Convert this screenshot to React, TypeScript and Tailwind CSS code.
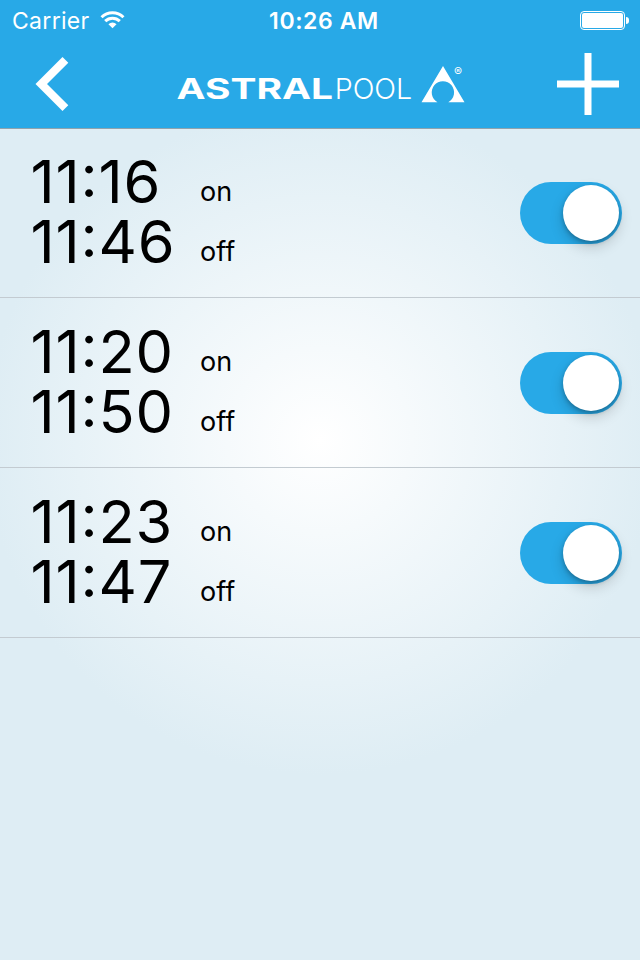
import { useState } from "react";
import clsx from "clsx";

type TimerType = { id: number; on: string; off: string; enabled: boolean };

const initialTimers: TimerType[] = [
    { id: 1, on: "11:16", off: "11:46", enabled: true },
    { id: 2, on: "11:20", off: "11:50", enabled: true },
    { id: 3, on: "11:23", off: "11:47", enabled: true },
];

const StatusBar = () => (
    <div className="grid h-10 grid-cols-3 items-center pl-3 pr-[11px]">
        <div className="flex items-center gap-[10px]">
            <span className="pt-0.5 text-[23px] leading-8 tracking-[0.3px]">Carrier</span>
            <svg width="25" height="18" viewBox="0 0 26 18" fill="none" stroke="currentColor" strokeWidth="3.1">
                <path d="M1.6 6.2a16.2 16.2 0 0 1 22.8 0" />
                <path d="M5.4 10.2a10.8 10.8 0 0 1 15.2 0" />
                <path d="M13 17.6l-4.2-4.2a6 6 0 0 1 8.4 0z" fill="currentColor" stroke="none" />
            </svg>
        </div>
        <span className="pl-[7px] pt-0.5 text-center text-[23px] font-semibold leading-8 tracking-[0.6px]">10:26 AM</span>
        <div className="flex items-center justify-end gap-px">
            <div className="h-[19px] w-[45px] rounded-[4px] border border-white p-px">
                <div className="h-full w-full rounded-[2px] bg-white" />
            </div>
            <div className="h-[7px] w-[3px] rounded-r-[3px] bg-white" />
        </div>
    </div>
);

const Logo = () => (
    <svg width="290" height="42" viewBox="0 0 290 42" fill="#fff" fontFamily="Inter, sans-serif">
        <text x="0.5" y="35.6" fontSize="28" fontWeight="700" textLength="156.5" lengthAdjust="spacingAndGlyphs">ASTRAL</text>
        <text x="158.7" y="35.6" fontSize="28" fontWeight="300" textLength="77.5" lengthAdjust="spacingAndGlyphs">POOL</text>
        <path d="M267 3L288.5 39.3H272.3A11.2 11.2 0 1 0 261.5 39.3H245.5Z" />
        <text x="282" y="13.3" fontSize="12" textAnchor="middle">®</text>
    </svg>
);

const Header = () => (
    <header className="h-[129px] border-b border-[#8fa3ae] bg-[#28a9e7] text-white">
        <StatusBar />
        <nav className="flex h-[88px] items-center justify-between pl-[35px] pr-[21px]">
            <button aria-label="Back" className="w-[71px]">
                <svg width="34" height="56" viewBox="0 0 34 56" fill="currentColor">
                    <path d="M27.5 1L33.3 6.8L12 28L33.3 49.2L27.5 55L0.5 28Z" />
                </svg>
            </button>
            <Logo />
            <button aria-label="Add timer" className="flex w-[83px] justify-end">
                <svg width="62" height="62" viewBox="0 0 62 62" stroke="currentColor" strokeWidth="7">
                    <path d="M31 0V62M0 31H62" />
                </svg>
            </button>
        </nav>
    </header>
);

type SwitchProps = { checked: boolean; onChange: () => void };

const Switch = ({ checked, onChange }: SwitchProps) => (
    <button
        role="switch"
        aria-checked={checked}
        onClick={onChange}
        className={clsx(
            "flex h-[62px] w-[102px] items-center rounded-full px-[3px]",
            checked ? "justify-end bg-[#28a9e7]" : "justify-start bg-[#c5d3da]",
        )}
    >
        <span className="h-14 w-14 rounded-full bg-white shadow-[0_2px_4px_rgba(0,0,0,0.25),0_6px_14px_rgba(0,0,0,0.18)]" />
    </button>
);

type TimeLineProps = { time: string; label: string };

const TimeLine = ({ time, label }: TimeLineProps) => (
    <div className="flex h-[60px] items-start">
        <span className="w-[169.5px] text-[59.5px] leading-[57px] tracking-[0.8px] [font-feature-settings:'case']">{time}</span>
        <span className="pt-3 text-[27px] leading-[54px]">{label}</span>
    </div>
);

type TimerRowProps = { timer: TimerType; onToggle: () => void };

const TimerRow = ({ timer, onToggle }: TimerRowProps) => (
    <li className="flex h-[170px] items-center justify-between border-b border-[#c3cbd1] pl-[30.5px] pr-[18px]">
        <div>
            <TimeLine time={timer.on} label="on" />
            <TimeLine time={timer.off} label="off" />
        </div>
        <Switch checked={timer.enabled} onChange={onToggle} />
    </li>
);

const App = () => {
    const [timers, setTimers] = useState<TimerType[]>(initialTimers);

    const toggleTimer = (id: number) => setTimers((current) => current.map((timer) => (timer.id === id ? { ...timer, enabled: !timer.enabled } : timer)));

    return (
        <div className="h-[960px] w-[640px] overflow-hidden bg-[radial-gradient(circle_at_320px_440px,#ffffff_0px,#deedf4_335px)] font-['Inter',sans-serif] text-black">
            <Header />
            <ul className="-mt-px">
                {timers.map((timer) => (
                    <TimerRow
                        key={timer.id}
                        timer={timer}
                        onToggle={() => toggleTimer(timer.id)}
                    />
                ))}
            </ul>
        </div>
    );
};

export default App;
